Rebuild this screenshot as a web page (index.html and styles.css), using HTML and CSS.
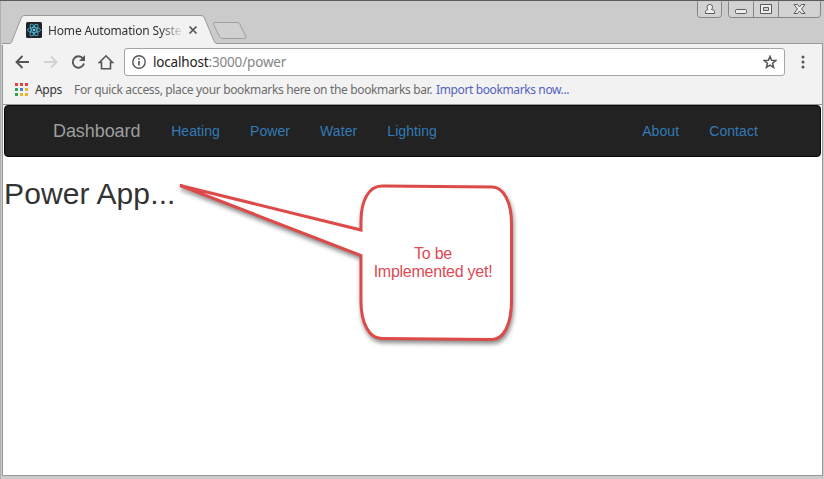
FILE: index.html
```html
<!DOCTYPE html>
<html lang="en">
<head>
<meta charset="utf-8">
<title>Home Automation System</title>
<link rel="stylesheet" href="styles.css">
</head>
<body>
<div class="window">
  <header class="titlebar">
    <svg class="tab-shape" width="260" height="30" viewBox="0 0 260 30">
      <path d="M0 28.5H7.5C9 28.500 9.500 27.500 10 26L19 3.500Q20 .5 22 .5H199Q201.500 .5 202.500 3L212 26Q213 28.500 215 28.500H260V30H0Z" fill="#f2f2f2"/>
      <path d="M0 28.500H7.500C9 28.500 9.500 27.500 10 26L19 3.500Q20 .5 22 .5H199Q201.500 .5 202.500 3L212 26Q213 28.500 215 28.500H260" fill="none" stroke="#999"/>
      <path d="M213 7.500H235Q237 7.500 238 9.500L244 22Q244.500 23.500 242.500 23.500H221Q218.500 23.500 217.500 21.500L211.500 9.500Q211 7.500 213 7.500Z" fill="#d0d0d0" stroke="#a0a0a0"/>
    </svg>
    <div class="tab">
      <svg class="favicon" width="16" height="16" viewBox="0 0 16 16">
        <rect width="16" height="16" rx="1.500" fill="#20232a"/>
        <g fill="none" stroke="#4fb5ce" stroke-width=".9">
          <ellipse cx="8" cy="8" rx="6.500" ry="2.500"/>
          <ellipse cx="8" cy="8" rx="6.500" ry="2.500" transform="rotate(60 8 8)"/>
          <ellipse cx="8" cy="8" rx="6.500" ry="2.500" transform="rotate(120 8 8)"/>
        </g>
        <circle cx="8" cy="8" r="1.300" fill="#61dafb"/>
      </svg>
      <span class="tab-title">Home Automation Syste</span>
      <svg class="tab-close" width="10" height="10" viewBox="0 0 10 10"><path d="M1.500 1.500l7 7M8.500 1.500l-7 7" stroke="#555" stroke-width="1.700"/></svg>
    </div>
    <svg class="controls" width="125" height="19" viewBox="0 0 125 19">
      <g fill="#d2d2d2" stroke="#858585">
        <path d="M.5 .5V13.500Q.5 16.500 3.500 16.500H21.500Q24.500 16.500 24.500 13.500V.5"/>
        <path d="M31.500 .5V13.500Q31.500 16.500 34.500 16.500H120.500Q123.500 16.500 123.500 13.500V.5M56.500 .5V16M81.500 .5V16"/>
      </g>
      <g fill="#eee" stroke="#5c5c5c">
        <path d="M8.500 12.500V10.500Q9 8.500 11 8.500Q10 7.500 10 5.500Q10.200 3.500 12.800 3.500T15.500 5.500Q15.500 7.500 14.500 8.500Q17 8.500 17.500 10.500V12.500Z"/>
        <rect x="38.500" y="8.500" width="11" height="4" rx="1"/>
        <path fill-rule="evenodd" d="M63.500 3.500H74.500V12.500H63.500ZM66.500 6.500V9.500H71.500V6.500Z"/>
        <path d="M97 3.500H100.500L102.500 6L104.500 3.500H108L104.500 8L108 12.500H104.500L102.500 10L100.500 12.500H97L100.500 8Z"/>
      </g>
    </svg>
  </header>
  <div class="toolbar">
    <svg class="nav-icons" width="104" height="18" viewBox="0 0 104 18" fill="none" stroke-width="1.900">
      <path d="M15 9H2.500M8.500 3L2.500 9l6 6" stroke="#555"/>
      <path d="M30 9H42.500M37 3.500L42.500 9l-5.500 5.500" stroke="#d2d2d2"/>
      <path d="M69 5.500A5.700 5.700 0 1 0 70 10.500" stroke="#555"/>
      <path d="M71 2V8H65Z" fill="#555"/>
      <path d="M87.500 9.500V15.700H96.500V9.500H98.500L92 2.800L85.500 9.500Z" stroke="#555" stroke-width="1.600"/>
    </svg>
    <div class="omnibox">
      <svg width="14" height="14" viewBox="0 0 14 14" fill="none" stroke="#555" stroke-width="1.400"><circle cx="7" cy="7" r="6.200"/><path d="M7 6v4.500M7 3.300v1.500" stroke-width="1.700"/></svg>
      <span class="url"><b>localhost</b>:3000/power</span>
      <svg class="star" width="14" height="14" viewBox="0 0 14 14"><path d="M7 1.400L8.600 5.200L12.800 5.500L9.600 8.200L10.600 12.400L7 10.100L3.400 12.400L4.400 8.200L1.200 5.500L5.400 5.200Z" fill="none" stroke="#555" stroke-width="1.500"/></svg>
    </div>
    <svg class="menu" width="4" height="14" viewBox="0 0 4 14" fill="#555"><circle cx="2" cy="2" r="1.500"/><circle cx="2" cy="7" r="1.500"/><circle cx="2" cy="12" r="1.500"/></svg>
  </div>
  <div class="bookmarks">
    <svg width="13" height="13" viewBox="0 0 13 13">
      <path d="M0 0h3v3H0zM5 0h3v3H5zM10 0h3v3h-3z" fill="#df4639"/>
      <path d="M0 5h3v3H0z" fill="#35a05a"/><path d="M5 5h3v3H5z" fill="#3a86df"/><path d="M10 5h3v3h-3z" fill="#e8b52b"/>
      <path d="M0 10h3v3H0z" fill="#35a05a"/><path d="M5 10h3v3H5zM10 10h3v3h-3z" fill="#e8b52b"/>
    </svg>
    <span class="apps">Apps</span>
    <span class="hint">For quick access, place your bookmarks here on the bookmarks bar.</span>
    <a class="import">Import bookmarks now...</a>
  </div>
  <main class="page">
    <nav class="navbar">
      <a class="brand">Dashboard</a>
      <a>Heating</a><a>Power</a><a>Water</a><a>Lighting</a>
      <a class="right">About</a><a>Contact</a>
    </nav>
    <h2>Power App...</h2>
  </main>
  <div class="callout">
    <svg width="350" height="175" viewBox="0 0 350 175">
      <path d="M10 9.500L191 54V46C191 24 199 10 212 10L322 11C334 11 341.500 27 341.500 48V124C341.500 148 334 163.500 322 163.500L212 162.500C199 162.500 191 147 191 125V79.500Z" fill="#fff" stroke="#dc4a4a" stroke-width="3"/>
    </svg>
    <p>To be<br>Implemented yet!</p>
  </div>
</div>
</body>
</html>
```
FILE: styles.css
```css
* { box-sizing: border-box; }
body { margin: 0; overflow: hidden; background: #cbcbcb; }
svg { display: block; flex: none; }
.window {
  position: relative;
  width: 824px;
  height: 479px;
  padding: 0 1px 3px 2px;
  border-top: 1px solid #5c5c5c;
  background: #cbcbcb;
  box-shadow: inset 1px 0 #b0b0b0;
  display: flex;
  flex-direction: column;
  font-family: "Noto Sans", sans-serif;
  font-size: 12px;
}
.titlebar {
  position: relative;
  height: 43px;
  flex: none;
  display: flex;
  border-bottom: 1px solid #999;
}
.tab-shape { position: absolute; left: 0; top: 14px; }
.tab {
  position: relative;
  display: flex;
  align-items: center;
  width: 174px;
  height: 28px;
  margin: 15px 0 0 24px;
}
.tab-title {
  width: 134px;
  margin-left: 6px;
  white-space: nowrap;
  letter-spacing: -0.16px;
  color: #333;
  -webkit-mask-image: linear-gradient(90deg, #000 112px, transparent 136px);
  mask-image: linear-gradient(90deg, #000 112px, transparent 136px);
}
.tab-close { margin-left: 6px; }
.controls { margin: 0 1px 0 auto; }
.toolbar {
  height: 36px;
  flex: none;
  display: flex;
  align-items: center;
  padding: 0 14px 0 11px;
  background: #f2f2f2;
  border-left: 1px solid #999;
  border-right: 1px solid #999;
}
.omnibox {
  display: flex;
  align-items: center;
  width: 661px;
  height: 28px;
  margin-left: 6px;
  padding: 0 7px;
  border: 1px solid #a5a5a5;
  border-radius: 3px;
  background: #fff;
}
.url { margin-left: 7px; font-size: 13.500px; letter-spacing: -0.17px; color: #858585; }
.url b { font-weight: 400; color: #222; }
.star { margin-left: auto; }
.menu { margin-left: 16px; }
.bookmarks {
  height: 25px;
  flex: none;
  display: flex;
  align-items: center;
  padding: 0 0 5px 12px;
  background: #f2f2f2;
  border: solid #999;
  border-width: 0 1px 1px;
  white-space: nowrap;
}
.apps { width: 32px; margin-left: 7px; color: #333; letter-spacing: -0.3px; }
.hint { width: 359px; margin-left: 7px; color: #6c6c6c; letter-spacing: -0.35px; }
.import { margin-left: 3px; color: #5363bd; letter-spacing: -0.38px; }
.page {
  flex: 1;
  padding: 0 1px;
  background: #fff;
  border: solid #999;
  border-width: 0 1px 1px;
  font-family: "Liberation Sans", Arial, sans-serif;
}
.navbar {
  display: flex;
  align-items: center;
  gap: 30px;
  height: 52px;
  padding: 0 62px 0 48px;
  background: #222;
  border: 1px solid #080808;
  border-radius: 4px;
  font-size: 14px;
  letter-spacing: 0.08px;
  color: #337ab7;
}
.brand { margin-right: 0.8px; font-size: 18px; letter-spacing: -0.08px; color: #9d9d9d; }
.right { margin-left: auto; }
h2 {
  margin: 20px 0 0;
  font-size: 30px;
  font-weight: 500;
  line-height: 33px;
  letter-spacing: 0.12px;
  color: #333;
}
.callout {
  position: absolute;
  left: 170px;
  top: 175px;
  width: 350px;
  height: 175px;
}
.callout svg { filter: drop-shadow(1px 3px 2px rgba(0, 0, 0, .45)); }
.callout p {
  position: absolute;
  left: 193px;
  top: 69px;
  width: 140px;
  margin: 0;
  text-align: center;
  font: 16px/18px "Liberation Sans", Arial, sans-serif;
  letter-spacing: -0.25px;
  color: #dc4a55;
}
```
